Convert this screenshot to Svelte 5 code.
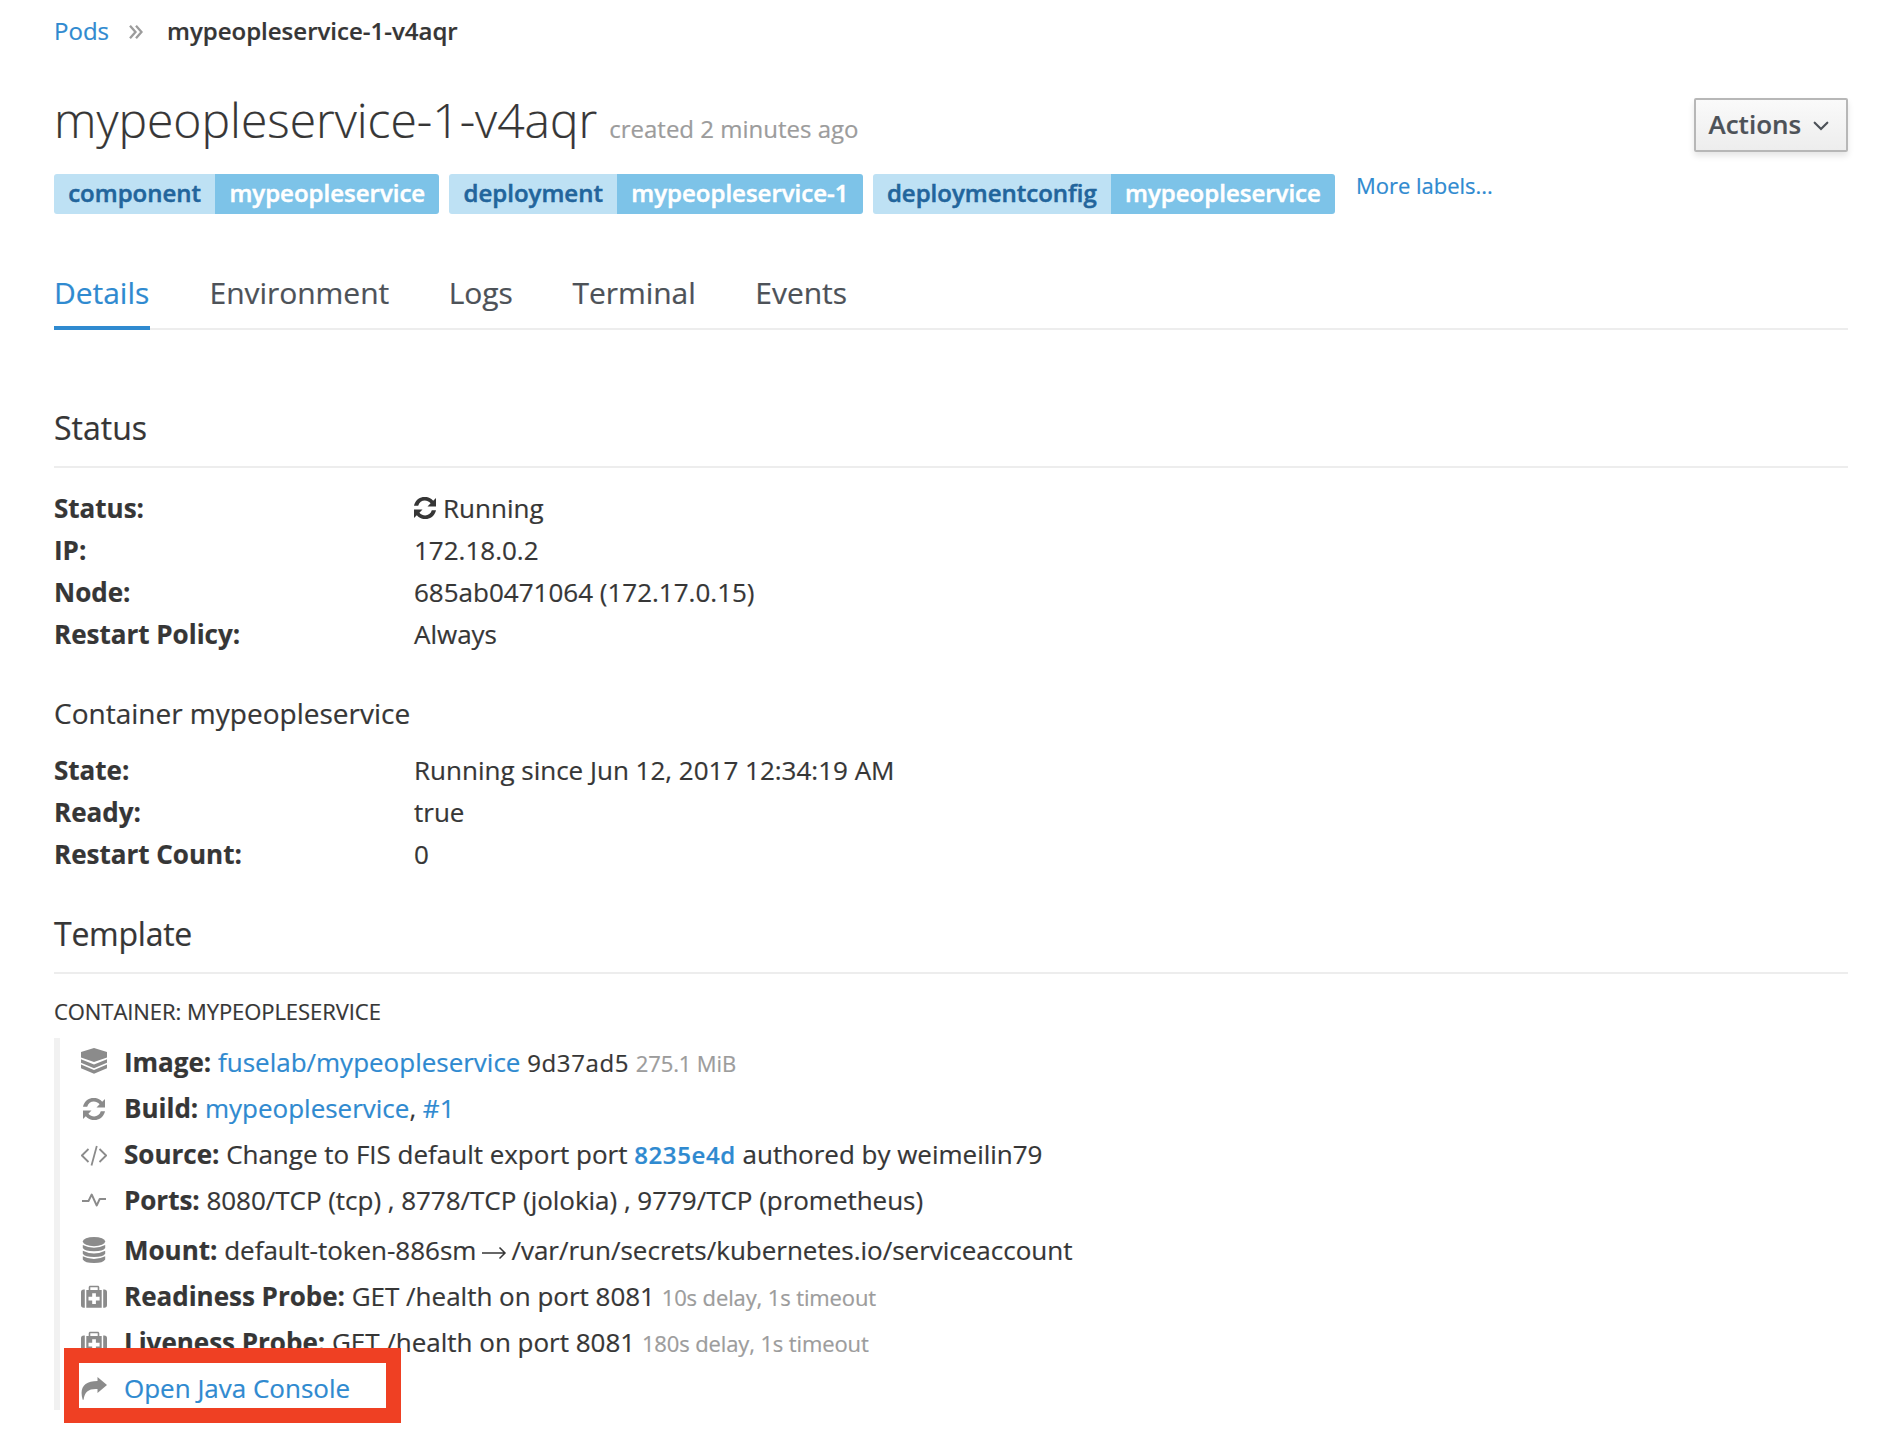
<script>
  const labels = [
    ['component', 'mypeopleservice'],
    ['deployment', 'mypeopleservice-1'],
    ['deploymentconfig', 'mypeopleservice'],
  ];
  const tabs = ['Details', 'Environment', 'Logs', 'Terminal', 'Events'];
  const containerRows = [
    ['State:', 'Running since Jun 12, 2017 12:34:19 AM'],
    ['Ready:', 'true'],
    ['Restart Count:', '0'],
  ];
</script>

{#snippet refresh()}
  <svg class="refresh" viewBox="0 0 22 22" fill="currentColor">
    <path d="M0 8.700C2-.5 13-3.200 19.200 3.700L22 1v8.500h-8.500l3.100-3.200C12.500 1.600 5.700 3.200 4.200 8.700z" />
    <path d="M22 13.300C20 22.500 9 25.200 2.800 18.300L0 21v-8.500h8.500l-3.100 3.200C9.500 20.400 16.300 18.800 17.800 13.300z" />
  </svg>
{/snippet}

{#snippet medkit()}
  <svg viewBox="0 -2 26 26" fill="currentColor">
    <path fill-rule="evenodd" d="M5.300 5h2.400V2.300C7.700 1.200 8.400.7 9.300.7h7.400c.9 0 1.600.5 1.600 1.600V5h2.400v17.700H5.300zM9.300 2.200V5h7.400V2.200zM11.200 8.200v3.600H7.500v3.700h3.700v3.600h3.700v-3.600h3.700v-3.700h-3.700V8.200z" />
    <path d="M3.800 4.500v18.200H2.700Q0 22.700 0 20V7.200Q0 4.500 2.700 4.500zM22.200 4.500v18.200h1.100Q26 22.700 26 20V7.200Q26 4.500 23.300 4.500z" />
  </svg>
{/snippet}

<main>
  <nav class="crumbs">
    <a>Pods</a>
    <svg viewBox="0 0 14 14" fill="none" stroke="#9c9c9c" stroke-width="2.300">
      <path d="M1 .8 6.500 7 1 13.200M7 .8 12.500 7 7 13.200" />
    </svg>
    <strong>mypeopleservice-1-v4aqr</strong>
  </nav>

  <header>
    <h1>mypeopleservice-1-v4aqr<small>created 2 minutes ago</small></h1>
    <button>
      <span>Actions</span>
      <svg viewBox="0 0 16 10" fill="none" stroke="currentColor" stroke-width="2.200" stroke-linecap="round">
        <path d="M1.700 1.700 8 8l6.300-6.300" />
      </svg>
    </button>
  </header>

  <div class="labels">
    {#each labels as [key, value]}
      <span class="label"><span class="key">{key}</span><span class="value">{value}</span></span>
    {/each}
    <a class="more">More labels...</a>
  </div>

  <ul class="tabs">
    {#each tabs as tab, i}
      <li class:active={i === 0}>{tab}</li>
    {/each}
  </ul>

  <h2>Status</h2>
  <dl>
    <dt>Status:</dt>
    <dd class="running">{@render refresh()}Running</dd>
    <dt>IP:</dt>
    <dd>172.18.0.2</dd>
    <dt>Node:</dt>
    <dd>685ab0471064 (172.17.0.15)</dd>
    <dt>Restart Policy:</dt>
    <dd>Always</dd>
  </dl>

  <h3>Container mypeopleservice</h3>
  <dl class="state">
    {#each containerRows as [term, detail]}
      <dt>{term}</dt>
      <dd>{detail}</dd>
    {/each}
  </dl>

  <h2 class="template">Template</h2>
  <h4>CONTAINER: MYPEOPLESERVICE</h4>

  <section class="pod">
    <div class="row">
      <span class="icon">
        <svg viewBox="0 0 26 26" fill="currentColor">
          <path d="M13 0 26 4v5.500l-13 4.500L0 9.500V4z" />
          <path d="M0 11.200l13 5.300 13-5.300v3.600l-13 5.400-13-5.400zM0 16.600l13 5.400 13-5.400v3.600l-13 5.500-13-5.500z" />
        </svg>
      </span>
      <p><b>Image:</b> <a>fuselab/mypeopleservice</a> <code>9d37ad5</code> <small>275.1 MiB</small></p>
    </div>
    <div class="row">
      <span class="icon">{@render refresh()}</span>
      <p><b>Build:</b> <a>mypeopleservice</a>, <a>#1</a></p>
    </div>
    <div class="row">
      <span class="icon">
        <svg viewBox="0 0 26 26" fill="none" stroke="currentColor" stroke-width="1.800">
          <path d="M7.500 8 .9 14.500 7.500 21M18.500 8l6.600 6.500-6.600 6.500M15.800 5l-5.300 19.500" />
        </svg>
      </span>
      <p><b>Source:</b> Change to FIS default export port <a><code class="commit">8235e4d</code></a> authored by weimeilin79</p>
    </div>
    <div class="row">
      <span class="icon">
        <svg viewBox="0 0 26 26" fill="none" stroke="currentColor" stroke-width="1.900" stroke-linejoin="round">
          <path d="M1 14h6.500l3.200-6.500 5 11 3-6.500H25" />
        </svg>
      </span>
      <p class="ports"><b>Ports:</b> 8080/TCP (tcp) , 8778/TCP (jolokia) , 9779/TCP (prometheus)</p>
    </div>
    <div class="row mount">
      <span class="icon">
        <svg viewBox="0 0 26 26" fill="currentColor">
          <ellipse cx="13" cy="4.600" rx="11.200" ry="4.600" />
          <path d="M1.800 8q11.200 5.500 22.400 0v3q-2 3.200-11.200 3.200T1.800 11zM1.800 13.700q11.200 5.500 22.400 0v3q-2 3.200-11.200 3.200T1.800 16.700zM1.800 19.300q11.200 5.500 22.400 0v3.200Q22.200 26 13 26T1.800 22.500z" />
        </svg>
      </span>
      <p>
        <b>Mount:</b> default-token-886sm<svg class="arrow" viewBox="0 0 26 14" fill="none" stroke="currentColor" stroke-width="1.500"><path d="M1 7h23M18.500 1.500l5.500 5.500-5.500 5.500" /></svg>/var/run/secrets/kubernetes.io/serviceaccount
      </p>
    </div>
    <div class="row">
      <span class="icon">{@render medkit()}</span>
      <p><b>Readiness Probe:</b> GET /health on port 8081 <small>10s delay, 1s timeout</small></p>
    </div>
    <div class="row">
      <span class="icon">{@render medkit()}</span>
      <p><b>Liveness Probe:</b> GET /health on port 8081 <small>180s delay, 1s timeout</small></p>
    </div>
    <div class="row">
      <span class="icon">
        <svg viewBox="0 -1 26 26" fill="currentColor">
          <path d="M16.500 1 26 9l-9.500 8v-4C8 12.500 3.500 15.500 2.600 23.800H1.700C-2 11.500 3.500 5 16.500 5z" />
        </svg>
      </span>
      <p><a>Open Java Console</a></p>
    </div>
    <div class="highlight"></div>
  </section>
</main>

<style>
  :global(body) {
    margin: 0;
    background: #fff;
  }
  main {
    box-sizing: border-box;
    height: 1438px;
    padding: 11px 50px 0 54px;
    overflow: hidden;
    font: 26px/42px 'Open Sans', 'Noto Sans', sans-serif;
    color: #363636;
    -webkit-text-stroke: 0.2px currentColor;
  }
  h1, h2, h3, h4, p, dl, dd, ul {
    margin: 0;
    padding: 0;
    font-weight: 400;
  }
  a {
    color: #2f8ad0;
    -webkit-text-stroke-color: #2f8ad0;
  }
  svg {
    display: block;
    flex: none;
  }
  .crumbs {
    display: flex;
    align-items: center;
    height: 40px;
    font-size: 24px;
  }
  .crumbs svg {
    width: 14px;
    height: 14px;
    margin: 2px 24px 0 20px;
  }
  .crumbs strong {
    font-weight: 600;
  }
  header {
    display: flex;
    justify-content: space-between;
    margin-top: 38px;
    height: 85px;
  }
  h1 {
    padding-top: 1px;
    font-size: 48px;
    line-height: 60px;
    font-weight: 300;
  }
  h1 small {
    margin-left: 12px;
    font-size: 24px;
    font-weight: 400;
    color: #9c9c9c;
    -webkit-text-stroke-color: #9c9c9c;
  }
  button {
    display: flex;
    align-items: center;
    box-sizing: border-box;
    width: 154px;
    height: 54px;
    margin-top: 9px;
    padding: 0 0 2px 12.5px;
    border: 2px solid #b7b7b7;
    border-radius: 2px;
    background: linear-gradient(#fafafa, #ededed);
    box-shadow: 0 4px 6px rgba(3, 3, 3, 0.1);
    font: 600 26px/42px 'Open Sans', sans-serif;
    color: #4d5258;
    -webkit-text-stroke: 0.2px #4d5258;
  }
  button svg {
    width: 16px;
    height: 10px;
    margin: 3px 0 0 12px;
  }
  .labels {
    display: flex;
    gap: 10px;
    height: 40px;
    font-size: 24px;
    line-height: 38px;
  }
  .label {
    display: flex;
    border-radius: 3px;
    overflow: hidden;
    font-weight: 600;
  }
  .key, .value {
    padding: 0 14.2px;
  }
  .key {
    background: #bee1f4;
    color: #22659c;
    -webkit-text-stroke: 0.5px #22659c;
  }
  .value {
    background: #7dc3e8;
    color: #fff;
    -webkit-text-stroke: 0.5px #fff;
  }
  .more {
    margin-left: 11px;
    font-size: 22px;
    line-height: 23px;
    letter-spacing: -0.03px;
  }
  .tabs {
    display: flex;
    gap: 59.5px;
    height: 55px;
    margin-top: 59px;
    border-bottom: 2px solid #ededed;
    list-style: none;
    font-size: 30px;
    line-height: 40px;
    letter-spacing: -0.03px;
    color: #4d5258;
    -webkit-text-stroke-color: #4d5258;
  }
  .tabs li {
    box-sizing: border-box;
    height: 57px;
  }
  .tabs .active {
    width: 96px;
    border-bottom: 4px solid #2f8ad0;
    color: #2f8ad0;
    -webkit-text-stroke-color: #2f8ad0;
  }
  h2 {
    margin-top: 78px;
    padding-bottom: 18px;
    border-bottom: 2px solid #ededed;
    font-size: 32px;
    line-height: 40px;
  }
  dl {
    display: grid;
    grid-template-columns: 360px 1fr;
    margin-top: 19px;
  }
  dt, b {
    font-weight: 700;
  }
  .running {
    display: flex;
    align-items: center;
    gap: 7px;
  }
  .refresh {
    width: 22px;
    height: 22px;
  }
  h3 {
    margin-top: 38px;
    font-size: 28px;
    line-height: 40px;
  }
  .state {
    margin-top: 16px;
  }
  .template {
    margin-top: 39px;
    letter-spacing: -0.25px;
  }
  h4 {
    margin-top: 22px;
    font-size: 22px;
    line-height: 30px;
    letter-spacing: -0.06px;
  }
  .pod {
    position: relative;
    box-sizing: border-box;
    height: 372px;
    margin-top: 12px;
    padding: 1px 0 0 21px;
    border-left: 6px solid #f1f1f1;
  }
  .row {
    display: flex;
    height: 46px;
    line-height: 46px;
    letter-spacing: -0.01px;
    white-space: nowrap;
  }
  .ports {
    letter-spacing: -0.03px;
  }
  .mount {
    margin-top: 4px;
  }
  .icon {
    display: flex;
    justify-content: center;
    width: 26px;
    margin: 10px 17px 0 0;
    color: #8b8b8b;
  }
  .row:first-child .icon {
    margin-top: 9px;
  }
  .icon svg {
    width: 26px;
    height: 26px;
  }
  .icon .refresh {
    width: 22px;
    height: 22px;
    margin-top: 3px;
  }
  .row small {
    font-size: 22px;
    letter-spacing: -0.12px;
    color: #9c9c9c;
    -webkit-text-stroke-color: #9c9c9c;
  }
  code {
    font: 400 24px 'Open Sans', sans-serif;
    letter-spacing: 0.6px;
  }
  .commit {
    font-weight: 600;
  }
  .arrow {
    display: inline-block;
    width: 26px;
    height: 14px;
    margin: 0 4px 0 5px;
  }
  .highlight {
    position: absolute;
    left: 4px;
    top: 310px;
    box-sizing: border-box;
    width: 337px;
    height: 75px;
    border: 15px solid #ef4023;
  }
</style>
